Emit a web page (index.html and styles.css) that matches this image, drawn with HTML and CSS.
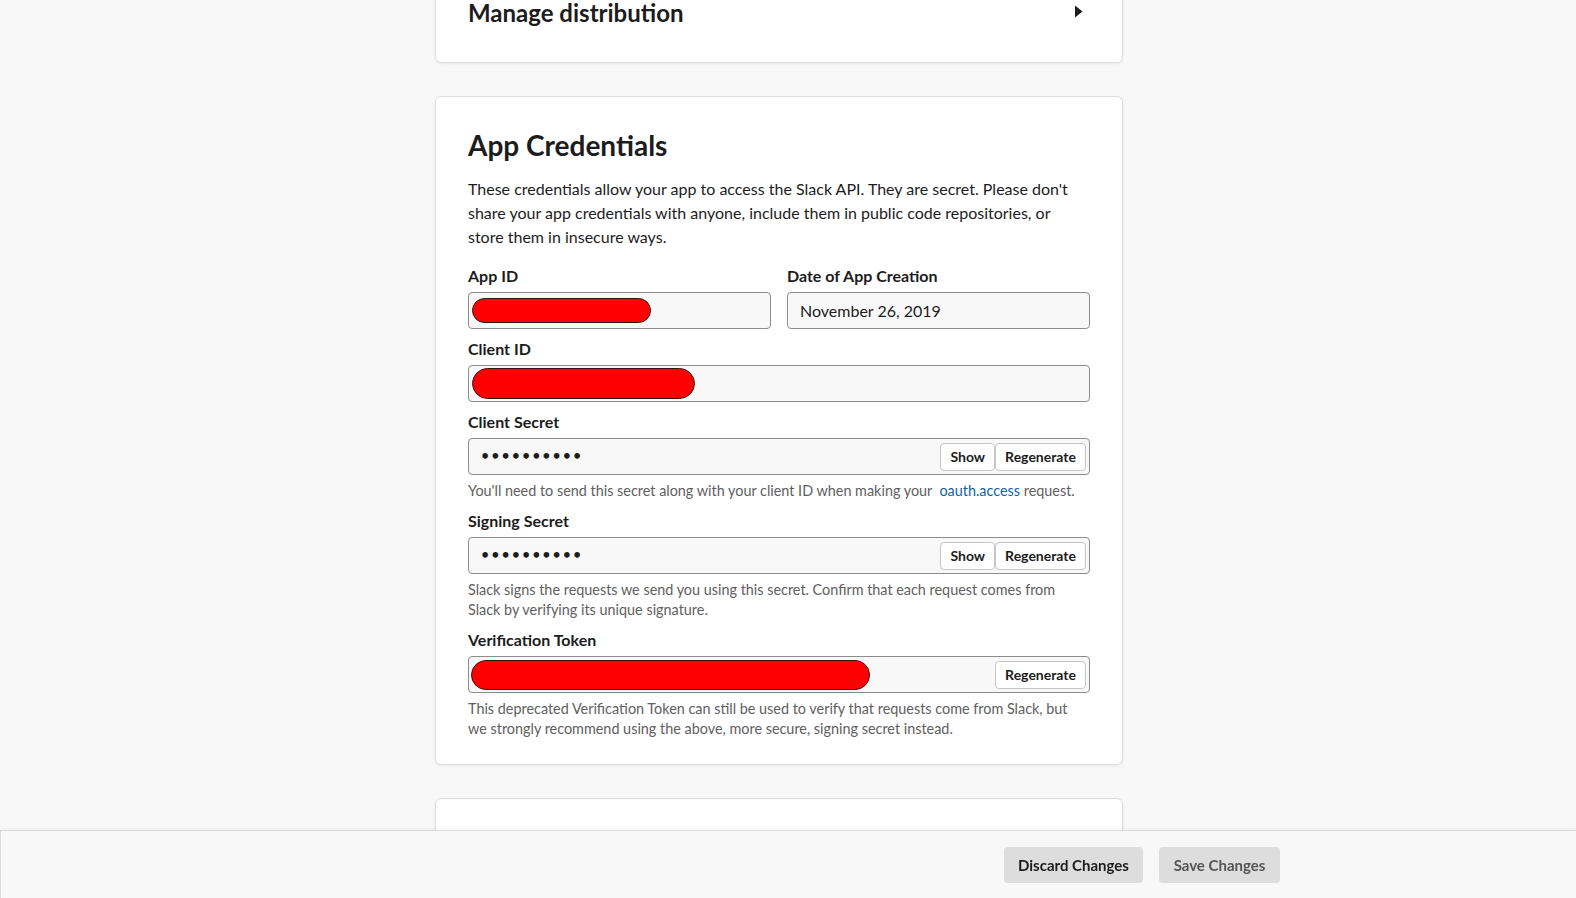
FILE: index.html
```html
<!DOCTYPE html>
<html lang="en">
<head>
<meta charset="utf-8">
<title>App Credentials</title>
<link rel="stylesheet" href="styles.css">
</head>
<body>
<div class="page">
  <main class="column">
    <section class="card card-collapsed">
      <div class="card-head">
        <h2 class="card-title-sm">Manage distribution</h2>
        <svg class="caret" width="9" height="13" viewBox="0 0 9 13"><path d="M1 0.5 L8.5 6.5 L1 12.5 Z" fill="#1d1c1d"/></svg>
      </div>
    </section>

    <section class="card card-creds">
      <h2 class="card-title">App Credentials</h2>
      <p class="intro">These credentials allow your app to access the Slack API. They are secret. Please don't share your app credentials with anyone, include them in public code repositories, or store them in insecure ways.</p>

      <div class="fields">
        <div class="row-two">
          <div class="field">
            <label class="label">App ID</label>
            <div class="input"><span class="redact redact-app"></span></div>
          </div>
          <div class="field">
            <label class="label">Date of App Creation</label>
            <div class="input"><span class="value">November 26, 2019</span></div>
          </div>
        </div>

        <div class="field">
          <label class="label">Client ID</label>
          <div class="input"><span class="redact redact-client"></span></div>
        </div>

        <div class="field">
          <label class="label">Client Secret</label>
          <div class="input input-btns">
            <span class="dots">••••••••••</span>
            <div class="btn-group">
              <button class="btn-small">Show</button>
              <button class="btn-small">Regenerate</button>
            </div>
          </div>
          <p class="help">You'll need to send this secret along with your client ID when making your&nbsp; <a class="link" href="#">oauth.access</a> request.</p>
        </div>

        <div class="field">
          <label class="label">Signing Secret</label>
          <div class="input input-btns">
            <span class="dots">••••••••••</span>
            <div class="btn-group">
              <button class="btn-small">Show</button>
              <button class="btn-small">Regenerate</button>
            </div>
          </div>
          <p class="help">Slack signs the requests we send you using this secret. Confirm that each request comes from Slack by verifying its unique signature.</p>
        </div>

        <div class="field">
          <label class="label">Verification Token</label>
          <div class="input input-btns">
            <span class="redact redact-token"></span>
            <div class="btn-group">
              <button class="btn-small">Regenerate</button>
            </div>
          </div>
          <p class="help">This deprecated Verification Token can still be used to verify that requests come from Slack, but we strongly recommend using the above, more secure, signing secret instead.</p>
        </div>
      </div>
    </section>

    <section class="card card-next"></section>
  </main>
</div>

<footer class="savebar">
  <button class="btn-bar btn-discard">Discard Changes</button>
  <button class="btn-bar btn-save">Save Changes</button>
</footer>
</body>
</html>
```

FILE: styles.css
```css
* { box-sizing: border-box; }

html, body {
  margin: 0;
  padding: 0;
  background: #f8f8f8;
  font-family: Lato, "Open Sans", "Liberation Sans", sans-serif;
  color: #1d1c1d;
  overflow: hidden;
}

.page {
  display: flex;
  justify-content: center;
  padding-right: 18px;
}

.column {
  width: 688px;
  margin-top: -35px;
  display: flex;
  flex-direction: column;
  gap: 33px;
}

.card {
  background: #fff;
  border: 1px solid #dedede;
  border-radius: 6px;
  box-shadow: 0 1px 3px rgba(0, 0, 0, 0.07);
  padding: 32px 32px 25px;
}

.card-collapsed {
  padding: 32px 32px 34px;
}

.card-head {
  display: flex;
  align-items: center;
  justify-content: space-between;
  height: 30px;
}

.card-title-sm {
  margin: 0;
  font-size: 24px;
  line-height: 30px;
  font-weight: 700;
}

.caret {
  margin-right: 7px;
  margin-top: -4px;
}

.card-title {
  margin: 0 0 16px;
  font-size: 28px;
  line-height: 32px;
  font-weight: 700;
}

.intro {
  margin: 0 0 17px;
  max-width: 608px;
  font-size: 16px;
  line-height: 24px;
}

.fields {
  display: flex;
  flex-direction: column;
  gap: 10px;
}

.row-two {
  display: grid;
  grid-template-columns: 1fr 1fr;
  gap: 16px;
}

.field {
  display: flex;
  flex-direction: column;
}

.label {
  font-size: 16px;
  line-height: 20px;
  font-weight: 700;
  margin-bottom: 6px;
}

.input {
  height: 37px;
  border: 1px solid #8d8c8d;
  border-radius: 4px;
  background: #f8f8f8;
  display: flex;
  align-items: center;
  padding: 0 12px;
  font-size: 16px;
}

.input-btns {
  justify-content: space-between;
  padding-right: 3px;
}

.value {
  color: #1d1c1d;
}

.redact {
  display: block;
  background: #ff0000;
  border: 1px solid #3a1010;
  border-radius: 16px;
  margin-left: -9px;
}

.redact-app { width: 179px; height: 25px; }
.redact-client { width: 223px; height: 31px; }
.redact-token { width: 399px; height: 30px; margin-left: -10px; }

.dots {
  font-family: "DejaVu Sans", sans-serif;
  font-size: 16px;
  font-weight: 700;
  letter-spacing: 0;
  color: #1d1c1d;
  margin-left: -1px;
}

.btn-group {
  display: flex;
}

.btn-small {
  height: 28px;
  padding: 0 9px;
  background: #fff;
  border: 1px solid #c6c6c6;
  border-radius: 4px;
  font-family: Lato, "Open Sans", sans-serif;
  font-size: 14px;
  font-weight: 700;
  color: #1d1c1d;
  cursor: pointer;
}

.help {
  margin: 6px 0 0;
  max-width: 608px;
  font-size: 14.4px;
  line-height: 20px;
  color: #616061;
}

.link {
  color: #1264a3;
  text-decoration: none;
}

.card-next {
  height: 200px;
}

.savebar {
  position: fixed;
  left: 0;
  right: 0;
  bottom: 0;
  height: 68px;
  background: #f8f8f8;
  border-top: 1px solid #dcdcdc;
  border-left: 1px solid #dcdcdc;
  box-shadow: 0 -1px 4px rgba(0, 0, 0, 0.06);
  display: flex;
  align-items: center;
  justify-content: flex-end;
  gap: 16px;
  padding-right: 296px;
}

.btn-bar {
  height: 36px;
  padding: 0 12px;
  border: none;
  border-radius: 4px;
  background: #dddddd;
  font-family: Lato, "Open Sans", sans-serif;
  font-size: 15px;
  font-weight: 700;
  cursor: pointer;
}

.btn-discard { color: #1d1c1d; width: 139px; }
.btn-save { color: #555555; width: 121px; }
```
